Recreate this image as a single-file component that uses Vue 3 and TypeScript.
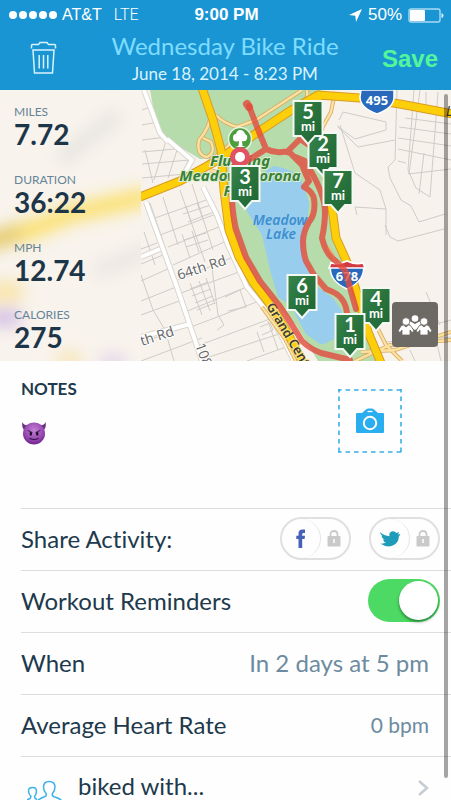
<script setup lang="ts">
import { ref } from 'vue'

interface Stat {
  label: string
  value: string
}

interface Marker {
  mile: number
  x: number
  y: number
}

const stats: Stat[] = [
  { label: 'MILES', value: '7.72' },
  { label: 'DURATION', value: '36:22' },
  { label: 'MPH', value: '12.74' },
  { label: 'CALORIES', value: '275' },
]

// Top centre of every mile flag, in map units
const markers: Marker[] = [
  { mile: 3, x: 245, y: 165 },
  { mile: 2, x: 323, y: 132 },
  { mile: 7, x: 338, y: 169 },
  { mile: 5, x: 308, y: 100 },
  { mile: 6, x: 302, y: 274 },
  { mile: 4, x: 376, y: 287 },
  { mile: 1, x: 350, y: 313 },
]

const shareFacebook = ref(false)
const shareTwitter = ref(false)
const reminders = ref(true)
</script>

<template>
  <div class="screen">
    <header class="header">
      <div class="status">
        <div class="carrier">
          <svg class="dots" width="48" height="10" viewBox="0 0 48 10" aria-hidden="true">
            <circle v-for="n in 5" :key="n" :cx="n * 10 - 6" cy="5" r="4" fill="#fff" />
          </svg>
          <span>AT&amp;T</span>
          <span class="network">LTE</span>
        </div>
        <div class="clock">9:00 PM</div>
        <div class="power">
          <svg width="13" height="13" viewBox="0 0 13 13" aria-hidden="true">
            <path d="M13 0 7 13 6.300 6.700 0 6Z" fill="#fff" />
          </svg>
          <span>50%</span>
          <svg width="36" height="15" viewBox="0 0 36 15" aria-hidden="true">
            <rect x="1" y="1" width="31" height="13" rx="2" fill="none" stroke="#a9dbf3" stroke-width="1.400" />
            <rect x="2" y="2" width="15" height="11" rx="1" fill="#fff" />
            <path d="M33.500 5q2 .5 2 2.500t-2 2.500z" fill="#d6effa" />
          </svg>
        </div>
      </div>
      <div class="nav">
        <button class="trash" type="button" aria-label="Delete">
          <svg width="27" height="33" viewBox="0 0 27 33" fill="none" stroke="#d9f3fd" stroke-width="1.500">
            <path d="M1.500 7.500V4.500Q1.500 3.500 2.500 3.500H8.500L10 1.500H17L18.500 3.500H24.500Q25.500 3.500 25.500 4.500V7.500" />
            <path d="M3 9H24L22.500 32H4.500Z" />
            <path d="M9.200 14V27.500M13.500 14V27.500M17.800 14V27.500" />
          </svg>
        </button>
        <div class="heading">
          <h1>Wednesday Bike Ride</h1>
          <p>June 18, 2014 - 8:23 PM</p>
        </div>
        <button class="save" type="button">Save</button>
      </div>
    </header>

    <section class="map">
      <svg class="canvas" viewBox="0 90 451 271" preserveAspectRatio="xMidYMid slice">
        <defs>
          <linearGradient id="flag" x1="0" y1="0" x2="1" y2="1">
            <stop offset="0" stop-color="#39854b" />
            <stop offset="0.500" stop-color="#28733d" />
            <stop offset="1" stop-color="#1c6533" />
          </linearGradient>
          <filter id="soft" x="-30%" y="-30%" width="160%" height="160%">
            <feGaussianBlur stdDeviation="8" />
          </filter>
          <clipPath id="side"><rect x="0" y="90" width="141" height="271" /></clipPath>
        </defs>
        <rect y="90" width="451" height="271" fill="#f7f3ec" />

        <!-- park and lake -->
        <path d="M150 90 154 112 165 138 200 159 224 158 226 200 232 230 242 255 263 290 296 325 318 361 380 361 358 300 334 235 326 180 313 130 310 105 321 90Z" fill="#b5dcaa" />
        <path d="M274 166Q292 168 301 180L309 202Q309 217 303 232L303 258 316 286 333 298 342 311 341 332Q335 346 320 344L306 334 290 305 278 297 270 270 262 235 246 210 252 180Z" fill="#98cdee" />
        <path d="M320 345Q333 342 342 332L350 340 342 355Z" fill="#b5dcaa" />

        <!-- street grid -->
        <g fill="none" stroke="#cfccc7" stroke-width="1">
          <path d="M142 110 153 106M142 125 158 122M142 140 167 137M142 152 186 148M142 164 190 160M142 178 185 174M153 183 145 150M166 141 154 180M178 147 168 178M190 157 181 176" />
          <path d="M150 203 166 250M163 197 178 245M180 190 205 262M192 184 213 250M155 218 209 199M160 235 216 214M168 247 224 225M173 265 233 238M178 280 243 253M181 293 250 268M185 312 259 282M191 327 267 298M197 346 278 316M203 359 288 331M247 361 300 342" />
          <path d="M186 206 191 222M197 203 203 219M183 214 211 205M188 222 214 212M182 234 190 258M192 231 199 252M184 240 206 233M186 247 208 240" />
          <path d="M190 283 202 315M199 281 210 311M206 278 215 304M190 289 208 282M192 296 211 289M195 303 213 296M197 310 215 303M211 260 218 315 224 325 217 330" />
          <path d="M141 249 157 243M141 264 163 255M141 281 170 268M141 301 176 287M141 315 182 300M141 343 190 325M141 361 202 338M141 275 153 310 165 330 174 361M144 232 155 265M225 297 240 290 246 307 228 311M257 332 264 352M268 321 278 350M260 327 270 323 273 330 262 335" />
          <path d="M339 120 343 112 386 122 386 130 355 139 337 126 358 147 395 140M340 125 355 173 380 190 386 209 355 207 357 215M397 90 395 160 388 167 390 178 401 200 411 206 419 222 445 214M386 209V235" />
          <path d="M414 90 408 170 416 188 430 197 438 92M420 90 409 174M424 153 419 194M398 107 451 114M399 127 451 134M398 138 451 146M398 149 451 160M398 161 406 163M408 174 451 169M405 118 451 124M426 92V112M385 225 390 237 398 241 444 229M414 330 451 320M426 292 440 325M385 342 451 337M410 350 415 361M435 335 441 361" />
        </g>
        <g fill="none" stroke="#dad6cf" stroke-width="6">
          <path d="M144 90 160 133 168 142M146 202 178 290 202 361M203 187 217 215 228 245 247 287 272 317 294 361M141 257 160 249M141 337 190 324M167 139Q180 150 192 160L179 183" />
        </g>
        <g fill="none" stroke="#fff" stroke-width="4">
          <path d="M144 90 160 133 168 142M146 202 178 290 202 361M203 187 217 215 228 245 247 287 272 317 294 361M141 257 160 249M141 337 190 324M167 139Q180 150 192 160L179 183" />
        </g>

        <!-- ramps -->
        <g fill="none" stroke="#d9aa5e" stroke-width="4">
          <path d="M212 110Q210 128 199 140 196 155 207 157 216 153 211 142L203 138M216 115Q223 123 237 127L256 120 302 90M222 151 192 176M224 150 237 137Q247 137 252 140M224 175 210 170M307 90 308 110 323 131M335 92 331 112 321 130M286 115 310 95M327 247 335 260" />
          <path d="M262 307 285 339 296 361M361 352 395 350 451 332M376 325 386 345 402 361M355 361 390 345 451 340" />
        </g>
        <g fill="none" stroke="#fbe1a2" stroke-width="2.400">
          <path d="M212 110Q210 128 199 140 196 155 207 157 216 153 211 142L203 138M216 115Q223 123 237 127L256 120 302 90M222 151 192 176M224 150 237 137Q247 137 252 140M224 175 210 170M307 90 308 110 323 131M335 92 331 112 321 130M286 115 310 95M327 247 335 260" />
          <path d="M262 307 285 339 296 361M361 352 395 350 451 332M376 325 386 345 402 361M355 361 390 345 451 340" />
        </g>

        <!-- highways -->
        <g fill="none" stroke-linejoin="round">
          <g stroke="#d89c22" stroke-width="9">
            <path d="M140 197 180 181 218 160 258 132 290 111 318 95 360 98 400 104 453 114" />
            <path d="M202 88 213 120 221 150 224 190 229 230 239 257 253 282 272 307 287 332 303 363" />
            <path d="M320 94 312 110 323 155 333 215 336 238 346 260 358 296 368 332 381 363" />
          </g>
          <g stroke="#fdcf0b" stroke-width="7">
            <path d="M140 197 180 181 218 160 258 132 290 111 318 95 360 98 400 104 453 114" />
            <path d="M202 88 213 120 221 150 224 190 229 230 239 257 253 282 272 307 287 332 303 363" />
            <path d="M320 94 312 110 323 155 333 215 336 238 346 260 358 296 368 332 381 363" />
          </g>
        </g>

        <!-- place names -->
        <g class="park" text-anchor="middle">
          <text x="240" y="166">Flushing</text>
          <text x="240" y="181">Meadows Corona</text>
          <text x="240" y="196">Park</text>
        </g>
        <g class="lake" text-anchor="middle">
          <text x="280" y="225">Meadow</text>
          <text x="281" y="239">Lake</text>
        </g>
        <g class="street">
          <text x="179" y="280" transform="rotate(-18 179 280)">64th Rd</text>
          <text x="142" y="346" transform="rotate(-18 142 346)">th Rd</text>
          <text x="195" y="345" transform="rotate(70 195 345)">108th</text>
        </g>
        <text class="parkway" x="266" y="306" transform="rotate(59 266 306)">Grand Central</text>
        <text class="edge" x="446" y="116">L</text>

        <!-- interstate shields -->
        <g stroke="#fff" stroke-width="1.500">
          <path d="M361 90H394V97Q394 108 377 114 360 108 360 97Z" fill="#2869bb" />
          <path d="M331 263Q339 265 347 261 355 265 363 263 367 280 347 289 327 280 331 263Z" fill="#2869bb" />
          <path d="M331 263Q339 265 347 261 355 265 363 263L365 268H329Z" fill="#d33b43" />
        </g>
        <g class="shield" text-anchor="middle">
          <text x="377" y="105">495</text>
          <text x="347" y="281">678</text>
        </g>

        <!-- ridden route -->
        <g fill="none" stroke="#e24a3d" stroke-opacity="0.800" stroke-linecap="round" stroke-linejoin="round">
          <path stroke-width="6" d="M249 106 257 127 266 149Q274 153 282 152T293 156L302 165Q306 175 309 181L304 187Q313 192 314 199 316 214 309 222 303 232 303 242 303 252 306 261L314 275 326 289Q337 293 341 298 346 304 347 313L346 335M266 149 247 161 235 164 232 200Q233 217 236 229L246 257 260 281 279 305 292 325 302 341Q310 349 321 353L350 360M289 150 300 139 309 145M293 156 305 161Q315 178 318 185 325 200 325 212T322 238Q325 251 332 258 341 265 346 272L350 288 356 309" />
          <path stroke-width="8" d="M247 104 249 107" />
        </g>
        <g>
          <circle cx="240" cy="139" r="11.500" fill="#4c9d3d" stroke="#e7f2df" stroke-width="1.500" />
          <path d="M238.500 146 239 141Q233 143 233 138 233 134 236 134 237 130 240 130 244 130 245 134 248 135 247 139 246 142 242 141L242.500 146 246 147H235Z" fill="#fff" />
          <circle cx="240" cy="157" r="10" fill="#e05162" />
          <circle cx="240" cy="157" r="5" fill="#fff" />
        </g>

        <!-- mile flags -->
        <g v-for="m in markers" :key="m.mile" :transform="`translate(${m.x} ${m.y})`" class="flag" text-anchor="middle">
          <path d="M-14.500 1H14.500V36H7L0 44-7 36H-14.500Z" fill="url(#flag)" stroke="#f4f8f2" stroke-width="2" />
          <text class="mile" y="19">{{ m.mile }}</text>
          <text class="unit" y="31">mi</text>
        </g>

        <!-- frosted strip under the statistics -->
        <g clip-path="url(#side)">
          <rect y="90" width="141" height="271" fill="#f8f3ec" />
          <g fill="none" filter="url(#soft)">
            <path d="M-20 244 35 228" stroke="#e5ca6a" stroke-width="18" />
            <path d="M20 235 70 214 150 196" stroke="#fbe171" stroke-width="18" />
            <path d="M60 160 118 115" stroke="#e6e3df" stroke-width="14" />
            <path d="M95 272 150 250" stroke="#e9e5e1" stroke-width="14" />
            <path d="M-10 292H22" stroke="#f9e4a9" stroke-width="20" />
            <path d="M-12 318H20" stroke="#d3bce6" stroke-width="16" />
            <path d="M58 360H80" stroke="#f7e3ab" stroke-width="14" />
            <path d="M102 362H124" stroke="#d9c9ea" stroke-width="12" />
          </g>
        </g>
      </svg>
      <dl class="stats">
        <div v-for="s in stats" :key="s.label">
          <dt>{{ s.label }}</dt>
          <dd>{{ s.value }}</dd>
        </div>
      </dl>
      <button class="friends" type="button" aria-label="Friends">
        <svg width="34" height="20" viewBox="0 0 34 20" fill="#fff">
          <circle cx="17" cy="3.500" r="3.300" />
          <path d="M10 7 12.500 6.500 17 9 21.500 6.500 24 7 20.500 12.500 17 15 13.500 12.500Z" />
          <g stroke="#6d6965" stroke-width="0.800">
            <circle cx="8" cy="6.500" r="3.800" />
            <circle cx="26" cy="6.500" r="3.800" />
            <path d="M0 16 3 11Q4 10 5.500 10L8 12 10.500 10Q12 10 13 11L16 16 14 17.500 12 15V20H4V15L2 17.500Z" />
            <path d="M18 16 21 11Q22 10 23.500 10L26 12 28.500 10Q30 10 31 11L34 16 32 17.500 30 15V20H22V15L20 17.500Z" />
          </g>
        </svg>
      </button>
    </section>

    <main>
      <section class="notes">
        <div>
          <h2>NOTES</h2>
          <svg class="devil" width="26" height="24" viewBox="-1 0 26 24" role="img" aria-label="Smiling devil">
            <defs>
              <radialGradient id="skin" cx="0.500" cy="0.350" r="0.650">
                <stop offset="0" stop-color="#c083d0" />
                <stop offset="0.600" stop-color="#9b4db5" />
                <stop offset="1" stop-color="#70258e" />
              </radialGradient>
            </defs>
            <path d="M.5 1Q2 5 7 4L3 10Q-1 6 .5 1ZM23.500 1Q22 5 17 4L21 10Q25 6 23.500 1Z" fill="#693180" />
            <circle cx="12" cy="12.500" r="11" fill="url(#skin)" />
            <path d="M6 9.500 10 11.500M18 9.500 14 11.500" stroke="#5c2474" stroke-width="1.200" fill="none" stroke-linecap="round" />
            <ellipse cx="8.800" cy="12.800" rx="1.300" ry="2" fill="#25102f" />
            <ellipse cx="15.200" cy="12.800" rx="1.300" ry="2" fill="#25102f" />
            <path d="M8 17.500Q12 19.500 16 17.500" stroke="#35104a" stroke-width="1.200" fill="none" stroke-linecap="round" />
          </svg>
        </div>
        <button class="photo" type="button" aria-label="Add photo">
          <svg class="dashes" width="64" height="64" viewBox="0 0 64 64" fill="none" stroke="#38afe6" stroke-width="1.600">
            <path d="M0 1H64M0 63H64M1 0V64M63 0V64" stroke-dasharray="4.600 3.900" stroke-dashoffset="1" />
          </svg>
          <svg width="28" height="26" viewBox="0 0 28 26">
            <path d="M1 5H6L10 1.500Q11 .5 12.500 .5H15.500Q17 .5 18 1.500L22 5H27Q28 5 28 6V24Q28 25 27 25H1Q0 25 0 24V6Q0 5 1 5Z" fill="#2aaef0" />
            <path d="M11.500 3.500H16.500" stroke="#fff" stroke-width="1.300" />
            <circle cx="14" cy="15" r="6.200" fill="none" stroke="#fff" stroke-width="2" />
          </svg>
        </button>
      </section>

      <div class="row">
        <span>Share Activity:</span>
        <div class="shares">
          <label class="share">
            <input v-model="shareFacebook" type="checkbox" aria-label="Share on Facebook" />
            <span class="knob">
              <svg width="10" height="19" viewBox="0 0 10 19">
                <path d="M2.500 19V10H.3V6.700H2.500V4.500Q2.500 .5 6.500 .5H9V4H7.500Q6.200 4 6.200 5.200V6.700H9L8.600 10H6.200V19Z" fill="#4662b8" />
              </svg>
            </span>
            <svg class="lock" width="14" height="17" viewBox="0 0 14 17">
              <path d="M3.500 7V4.500Q3.500 1 7 1T10.500 4.500V7" fill="none" stroke="#cacaca" stroke-width="1.800" />
              <rect x="0.500" y="6" width="13" height="10.500" rx="1" fill="#cacaca" />
              <path d="M7 9V13" stroke="#fff" stroke-width="1.500" />
            </svg>
          </label>
          <label class="share">
            <input v-model="shareTwitter" type="checkbox" aria-label="Share on Twitter" />
            <span class="knob">
              <svg width="22" height="16" viewBox="0 0 22 16">
                <path d="M1 1Q5 5 10.500 5.200 9.500 1.500 12.500 .5 15.500-.3 17.500 2L20 1 19 3.500 21.500 3 19.700 6Q20 10 16.500 13 10 18 1 12.500 4.500 13 7 11.500 4.500 11 4 8.500H5.500Q2.500 7 2.500 4.500L3.500 5Q1 3 1 1Z" fill="#1e9cb9" />
              </svg>
            </span>
            <svg class="lock" width="14" height="17" viewBox="0 0 14 17">
              <path d="M3.500 7V4.500Q3.500 1 7 1T10.500 4.500V7" fill="none" stroke="#cacaca" stroke-width="1.800" />
              <rect x="0.500" y="6" width="13" height="10.500" rx="1" fill="#cacaca" />
              <path d="M7 9V13" stroke="#fff" stroke-width="1.500" />
            </svg>
          </label>
        </div>
      </div>

      <div class="row">
        <label for="reminders">Workout Reminders</label>
        <input id="reminders" v-model="reminders" class="switch" type="checkbox" role="switch" />
      </div>

      <button class="row" type="button">
        <span>When</span>
        <span class="value when">In 2 days at 5 pm</span>
      </button>

      <button class="row" type="button">
        <span>Average Heart Rate</span>
        <span class="value">0 bpm</span>
      </button>

      <button class="row people" type="button">
        <svg class="pair" width="38" height="38" viewBox="0 0 38 38" fill="none" stroke="#3db2ea" stroke-width="1.500">
          <path d="M8 34Q8 22 12 19.500 14 18 17.500 16.800 19.500 16 19.300 14 16.500 11 16.500 7 16.500 1.500 22.200 1.500T28 7Q28 11 25.200 14 25 16 27 16.800 31 18 33.500 19.500 37 22 37 34" />
          <path d="M-1 20Q4 19 4 16.500 1.500 14 1.500 11 1.500 7.500 5.500 7.500T9.500 11Q9.500 14 7.500 16.500 7.500 18.500 10 19.500" />
        </svg>
        <span>biked with...</span>
        <svg class="chevron" width="12" height="18" viewBox="0 0 12 18" fill="none" stroke="#c5ccd2" stroke-width="2.500">
          <path d="M2 2 10 9 2 16" />
        </svg>
      </button>
    </main>
    <div class="scrollbar"></div>
  </div>
</template>

<style>
body {
  margin: 0;
  background: #fff;
}
</style>

<style scoped>
.screen {
  position: relative;
  height: 100vh;
  overflow: hidden;
  background: #fefefe;
  color: #20394c;
  font-family: Lato, "Liberation Sans", sans-serif;
  font-variant-ligatures: none;
}

button {
  margin: 0;
  padding: 0;
  border: 0;
  background: none;
  color: inherit;
  font: inherit;
  text-align: left;
  cursor: pointer;
}

svg {
  display: block;
  flex: none;
}

h1,
h2,
p,
dl,
dd {
  margin: 0;
}

.header {
  height: 90px;
  background: #1995d3;
  color: #fff;
}

.status {
  display: grid;
  grid-template-columns: 1fr auto 1fr;
  align-items: center;
  height: 30px;
  padding: 0 7px 0 9px;
  font: 17px/30px "Liberation Sans", sans-serif;
}

.carrier,
.power {
  display: flex;
  align-items: center;
}

.carrier {
  gap: 5px;
  font-size: 16px;
}

.network {
  margin-left: 7px;
  font-family: Roboto, sans-serif;
  font-weight: 300;
}

.clock {
  font-weight: 700;
}

.power {
  justify-content: flex-end;
  gap: 6px;
}

.nav {
  display: grid;
  grid-template-columns: 1fr auto 1fr;
  align-items: center;
  height: 58px;
  padding: 0 13px 0 30px;
}

.trash {
  justify-self: start;
  margin-bottom: 4px;
}

.heading {
  margin-left: -18px;
  text-align: center;
}

.heading h1 {
  color: #7edcff;
  font-size: 24px;
  font-weight: 400;
  line-height: 30px;
}

.heading p {
  color: #d9f3ff;
  font-size: 17px;
  line-height: 26px;
}

.save {
  justify-self: end;
  color: #53f69a;
  font: 700 24px/30px "Liberation Sans", sans-serif;
}

.map {
  position: relative;
  height: 271px;
  overflow: hidden;
}

.canvas {
  width: 100%;
  height: 100%;
}

.park {
  fill: #398039;
  font: italic 700 15px "Noto Sans", sans-serif;
  paint-order: stroke;
  stroke: #d9eed0;
  stroke-width: 2px;
}

.lake {
  fill: #3f8fd0;
  font: italic 600 14px "Noto Sans", sans-serif;
}

.street {
  fill: #6c6c6c;
  font: 14px "Noto Sans", sans-serif;
  paint-order: stroke;
  stroke: #fff;
  stroke-width: 2px;
}

.parkway {
  fill: #403e2e;
  font: 600 13px "Noto Sans", sans-serif;
  paint-order: stroke;
  stroke: #fde487;
  stroke-width: 2px;
}

.edge {
  fill: #333;
  font: italic 14px "Noto Sans", sans-serif;
}

.shield {
  fill: #fff;
  font: 700 13px "Noto Sans", sans-serif;
}

.flag {
  fill: #fff;
  font-weight: 700;
}

.mile {
  font-size: 20px;
}

.unit {
  font-size: 13px;
}

.stats {
  position: absolute;
  inset: 0 auto 0 0;
  display: grid;
  grid-template-rows: repeat(4, 1fr);
  width: 127px;
  padding-left: 14px;
}

.stats div {
  padding-top: 14px;
}

.stats dt {
  color: #668499;
  font-size: 12px;
  line-height: 16px;
}

.stats dd {
  color: #1d3548;
  font-size: 28px;
  font-weight: 700;
  line-height: 28px;
}

.friends {
  position: absolute;
  right: 13px;
  bottom: 14px;
  display: grid;
  place-items: center;
  width: 46px;
  height: 45px;
  border-radius: 4px;
  background: #6d6965;
}

.notes {
  display: flex;
  justify-content: space-between;
  box-sizing: border-box;
  height: 147px;
  padding: 18px 49px 0 21px;
}

.notes h2 {
  font-size: 17px;
  font-weight: 700;
  line-height: 20px;
}

.devil {
  margin-top: 22px;
}

.photo {
  position: relative;
  display: grid;
  place-items: center;
  width: 64px;
  height: 64px;
  margin-top: 10px;
}

.dashes {
  position: absolute;
  inset: 0;
}

.row {
  display: flex;
  align-items: center;
  justify-content: space-between;
  box-sizing: border-box;
  width: calc(100% - 21px);
  height: 62px;
  margin-left: 21px;
  padding: 0 11px 2px 0;
  border-top: 1px solid #dcdddf;
  font-size: 24px;
  line-height: 30px;
}

button.row {
  padding-right: 22px;
}

.shares {
  display: flex;
  gap: 18px;
}

.share {
  display: flex;
  align-items: center;
  box-sizing: border-box;
  width: 71px;
  height: 43px;
  border: 2px solid #e0e0e0;
  border-radius: 22px;
  cursor: pointer;
}

.share input {
  position: absolute;
  width: 1px;
  height: 1px;
  margin: 0;
  opacity: 0;
}

.knob {
  display: grid;
  place-items: center;
  box-sizing: border-box;
  width: 39px;
  height: 39px;
  border-right: 1px solid #e4e4e4;
  border-radius: 50%;
}

.lock {
  margin-left: 6px;
}

.switch {
  display: flex;
  align-items: center;
  box-sizing: border-box;
  width: 72px;
  height: 43px;
  margin: 0;
  padding: 2px;
  border-radius: 22px;
  background: #d9d9d9;
  appearance: none;
  cursor: pointer;
}

.switch::before {
  width: 39px;
  height: 39px;
  border-radius: 50%;
  background: #fff;
  box-shadow: 0 2px 3px rgba(0, 50, 10, 0.5);
  content: "";
}

.switch:checked {
  justify-content: flex-end;
  background: #4cd964;
}

.value {
  color: #6d8ba0;
  font-size: 21px;
}

.when {
  font-size: 24px;
}

button.people {
  align-items: flex-start;
  justify-content: flex-start;
  padding-top: 14px;
}

.pair {
  margin: 9px 13px 0 6px;
}

.chevron {
  margin: 8px 0 0 auto;
}

.scrollbar {
  position: absolute;
  top: 94px;
  right: 3px;
  bottom: 22px;
  width: 4px;
  border-radius: 2px;
  background: rgba(0, 0, 0, 0.35);
}
</style>
